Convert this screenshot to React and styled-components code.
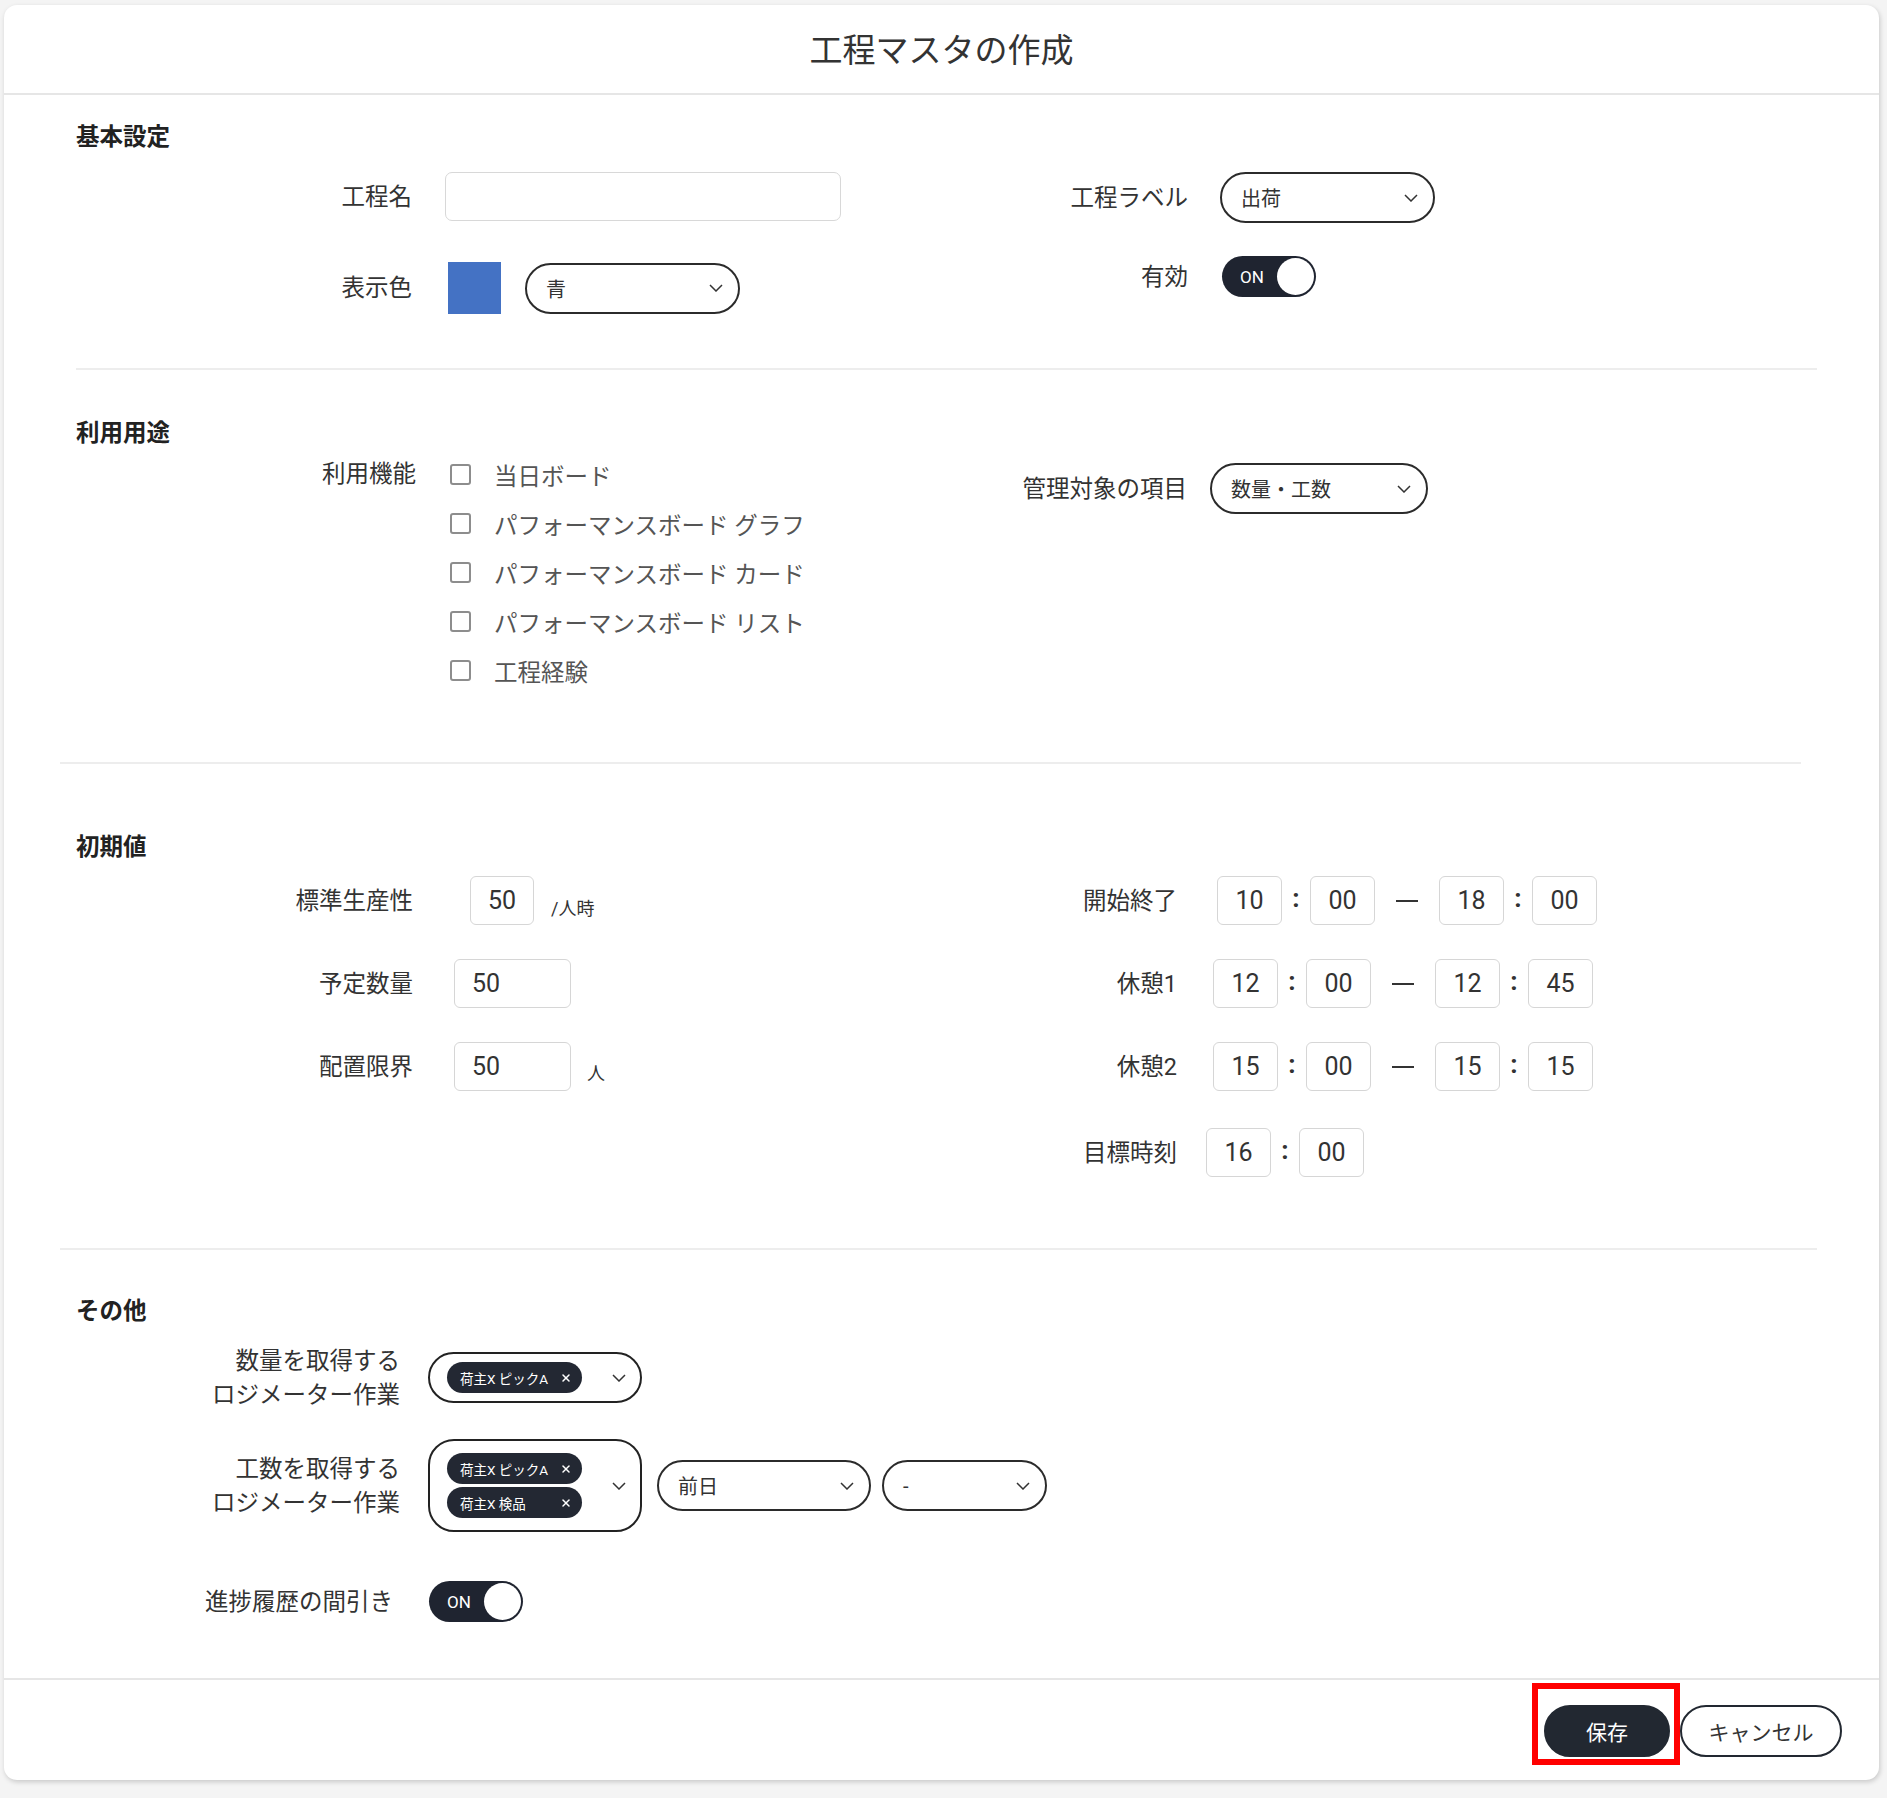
import React from "react";
import styled, { createGlobalStyle } from "styled-components";
import { X } from "lucide-react";

const GlobalStyle = createGlobalStyle`
  body {
    margin: 0;
    background: #f4f4f4;
    font-family: Roboto, "Noto Sans CJK JP", sans-serif;
    color: #333;
  }
`;

const Card = styled.div`
  margin: 5px 0 15px 4px;
  width: 1875px;
  background: #fff;
  border-radius: 13px;
  box-shadow: 1px 2px 5px rgba(0, 0, 0, 0.18);
`;

const Header = styled.header`
  height: 88px;
  display: flex;
  align-items: center;
  justify-content: center;
  border-bottom: 2px solid #e6e6e6;
`;

const Title = styled.h1`
  margin: 0;
  padding-top: 4px;
  font-size: 33px;
  font-weight: 400;
  line-height: 40px;
  color: #333;
`;

const Section = styled.section`
  padding: ${(p) => p.$pt}px 0 ${(p) => p.$pb}px;
`;

const SectionTitle = styled.h2`
  margin: 0 0 ${(p) => p.$mb}px 72px;
  font-size: 23.5px;
  font-weight: 700;
  line-height: 32px;
  color: #222;
`;

const Divider = styled.hr`
  border: 0;
  height: 2px;
  background: #ededed;
  margin: 0 ${(p) => p.$r}px 0 ${(p) => p.$l}px;
`;

const Columns = styled.div`
  display: flex;
  align-items: flex-start;
`;

const Column = styled.div`
  display: flex;
  flex-direction: column;
  gap: ${(p) => p.$gap || 0}px;
  padding-top: ${(p) => p.$pt || 0}px;
  width: ${(p) => (p.$w ? `${p.$w}px` : "auto")};
  flex: ${(p) => (p.$w ? "none" : 1)};
`;

const Row = styled.div`
  display: flex;
  align-items: ${(p) => (p.$top ? "flex-start" : "center")};
  height: ${(p) => (p.$h ? `${p.$h}px` : "auto")};
  margin-top: ${(p) => p.$mt || 0}px;
`;

const Label = styled.label`
  flex: none;
  width: ${(p) => p.$w}px;
  margin-right: ${(p) => p.$gap}px;
  text-align: right;
  font-size: 23.5px;
  line-height: ${(p) => p.$lh || 34}px;
  color: #333;
`;

const TextInput = styled.div`
  width: 396px;
  height: 49px;
  box-sizing: border-box;
  border: 1.5px solid #d8d8d8;
  border-radius: 7px;
`;

const Swatch = styled.span`
  width: 53px;
  height: 52px;
  background: ${(p) => p.$color};
`;

const SelectBox = styled.div`
  display: flex;
  align-items: center;
  justify-content: space-between;
  width: ${(p) => p.$w}px;
  height: 51px;
  margin-left: ${(p) => p.$ml || 0}px;
  box-sizing: border-box;
  padding: 0 15px 0 19px;
  border: 2px solid #2b2b2b;
  border-radius: 26px;
  font-size: 20px;
  color: #333;
`;

const ChevronSvg = styled.svg`
  flex: none;
  width: 14px;
  height: 8px;
`;

const Chevron = () => (
  <ChevronSvg viewBox="0 0 14 8">
    <polyline points="1,1 7,7 13,1" fill="none" stroke="#333" strokeWidth="1.5" />
  </ChevronSvg>
);

const Select = ({ value, w, ml }) => (
  <SelectBox $w={w} $ml={ml}>
    <span>{value}</span>
    <Chevron />
  </SelectBox>
);

const ToggleTrack = styled.div`
  display: flex;
  align-items: center;
  justify-content: space-between;
  width: 94px;
  height: 41px;
  box-sizing: border-box;
  padding: 2px 2px 2px 18px;
  border-radius: 21px;
  background: #1f2430;
  color: #fff;
  font-size: 17px;
`;

const Knob = styled.span`
  width: 37px;
  height: 37px;
  border-radius: 50%;
  background: #fff;
`;

const Toggle = () => (
  <ToggleTrack>
    <span>ON</span>
    <Knob />
  </ToggleTrack>
);

const CheckList = styled.div`
  display: flex;
  flex-direction: column;
`;

const CheckItem = styled.label`
  display: flex;
  align-items: center;
  gap: 23px;
  height: 49px;
  font-size: 23.5px;
  color: #555;
`;

const CheckBox = styled.span`
  flex: none;
  width: 21px;
  height: 21px;
  box-sizing: border-box;
  border: 2px solid #8d8d8d;
  border-radius: 3px;
`;

const NumBox = styled.div`
  display: flex;
  align-items: center;
  justify-content: ${(p) => (p.$left ? "flex-start" : "center")};
  width: ${(p) => p.$w}px;
  height: 49px;
  box-sizing: border-box;
  padding-left: ${(p) => (p.$left ? 17 : 0)}px;
  border: 1.5px solid #d6d6d6;
  border-radius: 6px;
  font-size: 25px;
  color: #333;
`;

const Unit = styled.span`
  align-self: flex-start;
  margin-left: ${(p) => p.$ml}px;
  padding-top: ${(p) => p.$pt}px;
  font-size: 18px;
  line-height: 24px;
  color: #333;
`;

const Colon = styled.span`
  width: 28px;
  text-align: center;
  font-size: 26px;
  font-weight: 700;
  line-height: 30px;
  padding-bottom: 6px;
`;

const Dash = styled.span`
  display: flex;
  justify-content: center;
  width: 64px;

  &::before {
    content: "";
    width: 22px;
    height: 2px;
    background: #333;
  }
`;

const MultiSelect = styled.div`
  display: flex;
  align-items: center;
  justify-content: space-between;
  width: 214px;
  height: ${(p) => p.$h}px;
  box-sizing: border-box;
  padding: 0 14px 0 17px;
  border: 2px solid #222;
  border-radius: 26px;
`;

const ChipList = styled.div`
  display: flex;
  flex-direction: column;
  gap: 3px;
`;

const Chip = styled.span`
  display: flex;
  align-items: center;
  justify-content: space-between;
  width: 135px;
  height: 31px;
  box-sizing: border-box;
  padding: 0 10px 0 13px;
  border-radius: 16px;
  background: #232833;
  color: #fff;
  font-size: 13.5px;
`;

const Footer = styled.footer`
  display: flex;
  justify-content: flex-end;
  gap: 10px;
  padding: 25px 37px 23px 0;
  border-top: 2px solid #e6e6e6;
`;

const Highlight = styled.span`
  position: relative;
  display: inline-flex;

  &::after {
    content: "";
    position: absolute;
    top: -22px;
    left: -12px;
    right: -10px;
    bottom: -8px;
    border: 6px solid #ff0000;
    pointer-events: none;
  }
`;

const Button = styled.button`
  width: ${(p) => p.$w}px;
  height: 52px;
  box-sizing: border-box;
  border: 2px solid #222831;
  border-radius: 26px;
  background: ${(p) => (p.$primary ? "#222831" : "#fff")};
  color: ${(p) => (p.$primary ? "#fff" : "#333")};
  font-family: inherit;
  font-size: 21px;
  cursor: pointer;
`;

const features = [
  "当日ボード",
  "パフォーマンスボード グラフ",
  "パフォーマンスボード カード",
  "パフォーマンスボード リスト",
  "工程経験",
];

const timeRows = [
  { label: "開始終了", gap: 40, values: ["10", "00", "18", "00"] },
  { label: "休憩1", gap: 36, values: ["12", "00", "12", "45"] },
  { label: "休憩2", gap: 36, values: ["15", "00", "15", "15"] },
];

const ChipItem = ({ children }) => (
  <Chip>
    <span>{children}</span>
    <X size={12} strokeWidth={3} />
  </Chip>
);

const App = () => {
  return (
    <>
      <GlobalStyle />
      <Card>
        <Header>
          <Title>工程マスタの作成</Title>
        </Header>

        <Section $pt={26} $pb={54}>
          <SectionTitle $mb={19}>基本設定</SectionTitle>
          <Columns>
            <Column $w={850} $gap={41}>
              <Row $h={49}>
                <Label $w={408} $gap={33}>工程名</Label>
                <TextInput />
              </Row>
              <Row $h={52}>
                <Label $w={408} $gap={36}>表示色</Label>
                <Swatch $color="#4472c4" />
                <Select value="青" w={215} ml={24} />
              </Row>
            </Column>
            <Column $gap={33}>
              <Row $h={51}>
                <Label $w={334} $gap={32}>工程ラベル</Label>
                <Select value="出荷" w={215} />
              </Row>
              <Row $h={41}>
                <Label $w={334} $gap={34}>有効</Label>
                <Toggle />
              </Row>
            </Column>
          </Columns>
        </Section>
        <Divider $l={72} $r={62} />

        <Section $pt={47} $pb={67}>
          <SectionTitle $mb={1}>利用用途</SectionTitle>
          <Columns>
            <Column $w={850}>
              <Row $top>
                <Label $w={412} $gap={34} $lh={49}>利用機能</Label>
                <CheckList>
                  {features.map((f) => (
                    <CheckItem key={f}>
                      <CheckBox />
                      {f}
                    </CheckItem>
                  ))}
                </CheckList>
              </Row>
            </Column>
            <Column $pt={13}>
              <Row $h={51}>
                <Label $w={333} $gap={23}>管理対象の項目</Label>
                <Select value="数量・工数" w={218} />
              </Row>
            </Column>
          </Columns>
        </Section>
        <Divider $l={56} $r={78} />

        <Section $pt={67} $pb={71}>
          <SectionTitle $mb={13}>初期値</SectionTitle>
          <Columns>
            <Column $w={850} $gap={34}>
              <Row $h={49}>
                <Label $w={409} $gap={57}>標準生産性</Label>
                <NumBox $w={64}>50</NumBox>
                <Unit $ml={17} $pt={21}>/人時</Unit>
              </Row>
              <Row $h={49}>
                <Label $w={409} $gap={41}>予定数量</Label>
                <NumBox $w={117} $left>50</NumBox>
              </Row>
              <Row $h={49}>
                <Label $w={409} $gap={41}>配置限界</Label>
                <NumBox $w={117} $left>50</NumBox>
                <Unit $ml={16} $pt={20}>人</Unit>
              </Row>
            </Column>
            <Column $gap={34}>
              {timeRows.map((r) => (
                <Row key={r.label} $h={49}>
                  <Label $w={323} $gap={r.gap}>{r.label}</Label>
                  <NumBox $w={65}>{r.values[0]}</NumBox>
                  <Colon>:</Colon>
                  <NumBox $w={65}>{r.values[1]}</NumBox>
                  <Dash />
                  <NumBox $w={65}>{r.values[2]}</NumBox>
                  <Colon>:</Colon>
                  <NumBox $w={65}>{r.values[3]}</NumBox>
                </Row>
              ))}
              <Row $h={49} $mt={3}>
                <Label $w={323} $gap={29}>目標時刻</Label>
                <NumBox $w={65}>16</NumBox>
                <Colon>:</Colon>
                <NumBox $w={65}>00</NumBox>
              </Row>
            </Column>
          </Columns>
        </Section>
        <Divider $l={56} $r={62} />

        <Section $pt={45} $pb={56}>
          <SectionTitle $mb={25}>その他</SectionTitle>
          <Column $gap={36}>
            <Row $h={51}>
              <Label $w={396} $gap={28}>
                数量を取得する
                <br />
                ロジメーター作業
              </Label>
              <MultiSelect $h={51}>
                <ChipList>
                  <ChipItem>荷主X ピックA</ChipItem>
                </ChipList>
                <Chevron />
              </MultiSelect>
            </Row>
            <Row $h={93}>
              <Label $w={396} $gap={28}>
                工数を取得する
                <br />
                ロジメーター作業
              </Label>
              <MultiSelect $h={93}>
                <ChipList>
                  <ChipItem>荷主X ピックA</ChipItem>
                  <ChipItem>荷主X 検品</ChipItem>
                </ChipList>
                <Chevron />
              </MultiSelect>
              <Select value="前日" w={214} ml={15} />
              <Select value="-" w={165} ml={11} />
            </Row>
            <Row $h={41} $mt={13}>
              <Label $w={389} $gap={36}>進捗履歴の間引き</Label>
              <Toggle />
            </Row>
          </Column>
        </Section>

        <Footer>
          <Highlight>
            <Button $primary $w={126}>保存</Button>
          </Highlight>
          <Button $w={162}>キャンセル</Button>
        </Footer>
      </Card>
    </>
  );
};

export default App;
